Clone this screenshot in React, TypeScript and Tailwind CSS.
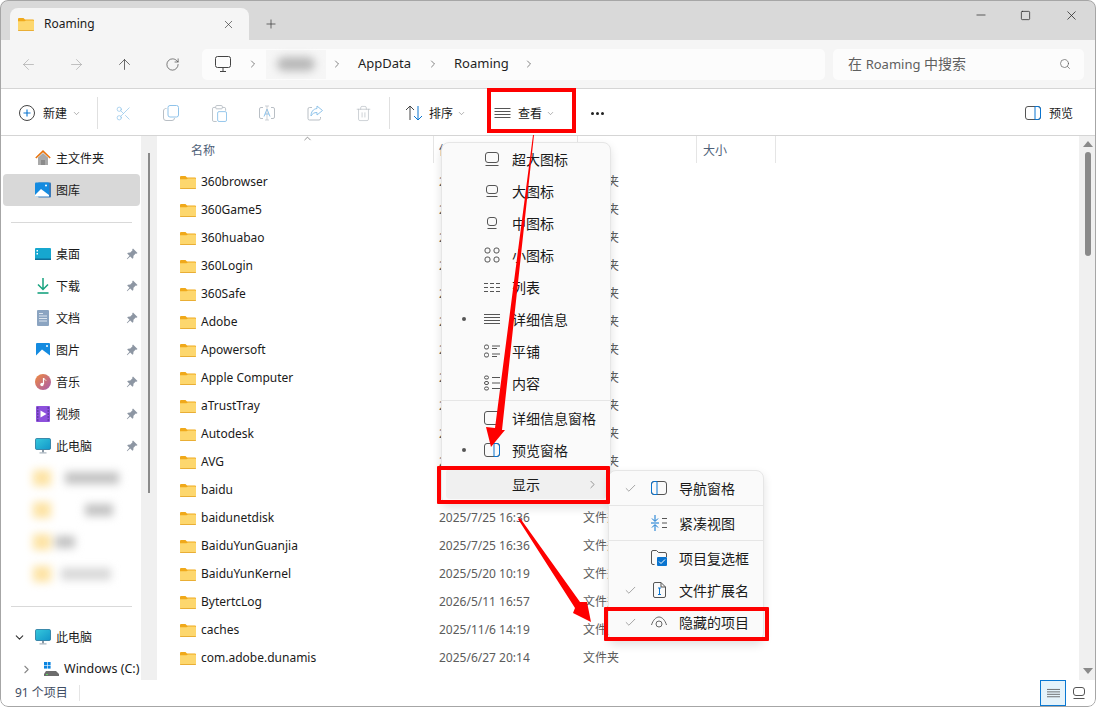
import { ChevronDown, ChevronRight, ChevronUp, Check, Search, X, Plus, Minus, Square, ArrowLeft, ArrowRight, ArrowUp, RotateCw, Scissors, Trash2 } from 'lucide-react'

type Ic = { className?: string }

const Folder = ({ className = 'w-[16px] h-[13px]' }: Ic) => (
  <svg viewBox="0 0 16 13" className={className}>
    <path d="M0 1a1 1 0 0 1 1-1h4.500l1.500 1.500h8a1 1 0 0 1 1 1V5H0z" fill="#f0a91b" />
    <path d="M0 3.200h6.500L8 2.400h7a1 1 0 0 1 1 1V12a1 1 0 0 1-1 1H1a1 1 0 0 1-1-1z" fill="#fdd76e" />
    <path d="M0 12h16v.2a.8.8 0 0 1-.8.8H.8a.8.8 0 0 1-.8-.8z" fill="#e9ae35" />
  </svg>
)

// 视图图标
const Lines = ({ className = 'w-[16px] h-[13px]', n = 4 }: Ic & { n?: number }) => (
  <svg viewBox="0 0 16 13" className={className} stroke="#555" strokeWidth="1" fill="none">
    {n === 4 && <path d="M0 1.500h16M0 4.500h16M0 7.500h16M0 10.500h16" />}
    {n === 3 && <path d="M0 2.500h4M6 2.500h4M12 2.500h4M0 6.500h4M6 6.500h4M12 6.500h4M0 10.500h4M6 10.500h4M12 10.500h4" />}
  </svg>
)

const Pane = ({ side }: { side: 'left' | 'right' | 'none' }) => (
  <svg viewBox="0 0 16 14" className="w-[16px] h-[14px]" fill="none">
    <rect x="0.500" y="0.500" width="15" height="13" rx="2.500" stroke="#555" />
    {side === 'right' && <path d="M10 .5h3a2.500 2.500 0 0 1 2.500 2.500v8a2.500 2.500 0 0 1-2.500 2.500h-3z" stroke="#0a74cf" />}
    {side === 'left' && <path d="M6 .5H3A2.500 2.500 0 0 0 .5 3v8A2.500 2.500 0 0 0 3 13.500h3z" stroke="#0a74cf" />}
  </svg>
)

const ThumbIcon = ({ w, h }: { w: number; h: number }) => (
  <svg width={w} height={h + 3} viewBox={`0 0 ${w} ${h + 3}`} fill="none" stroke="#555">
    <rect x="0.500" y="0.500" width={w - 1} height={h - 1} rx="2.500" />
    <path d={`M0.500 ${h + 2.5}h${w - 1}`} />
  </svg>
)

const SmallGrid = () => (
  <svg viewBox="0 0 16 16" className="w-[16px] h-[16px]" fill="none" stroke="#555">
    <rect x="1" y="1" width="5" height="5" rx="2" />
    <rect x="10" y="1" width="5" height="5" rx="2" />
    <rect x="1" y="10" width="5" height="5" rx="2" />
    <rect x="10" y="10" width="5" height="5" rx="2" />
  </svg>
)

const Tiles = () => (
  <svg viewBox="0 0 16 14" className="w-[16px] h-[14px]" fill="none" stroke="#555">
    <rect x="0.500" y="1" width="4" height="4" rx="1.500" />
    <rect x="0.500" y="9" width="4" height="4" rx="1.500" />
    <path d="M8 2h8M8 4.500h5M8 10h8M8 12.500h5" />
  </svg>
)

const ContentIc = () => (
  <svg viewBox="0 0 16 16" className="w-[16px] h-[16px]" fill="none" stroke="#555">
    <rect x="0.500" y="1" width="4" height="3" rx="1.500" />
    <rect x="0.500" y="6.500" width="4" height="3" rx="1.500" />
    <rect x="0.500" y="12" width="4" height="3" rx="1.500" />
    <path d="M8 2.500h8M8 8h8M8 13.500h8" />
  </svg>
)

const Pin = () => (
  <svg viewBox="0 0 12 12" className="w-[12px] h-[12px]" fill="#8d96a3">
    <path d="M7 .5l4.500 4.500-1 .8-.8-.3L7.500 7.700 7.300 10l-.8.800L4.200 8.500 1.200 11.200.8 10.800l2.700-3L1.200 5.500 2 4.700l2.300-.2L6.500 2.300l-.3-.8z" />
  </svg>
)

const Monitor = ({ className = 'w-[16px] h-[16px]' }: Ic) => (
  <svg viewBox="0 0 16 16" className={className}>
    <defs>
      <linearGradient id="pc" x1="0" y1="0" x2="1" y2="1">
        <stop offset="0" stopColor="#35c8dc" />
        <stop offset="1" stopColor="#1296c9" />
      </linearGradient>
    </defs>
    <rect x="0.500" y="0.500" width="15" height="11" rx="1.200" fill="url(#pc)" stroke="#15658f" strokeWidth="0.700" />
    <rect x="7" y="12" width="2" height="2.500" fill="#8a98a5" />
    <rect x="4.500" y="14.300" width="7" height="1.200" fill="#a7b3bd" />
  </svg>
)

const sideIcons: Record<string, React.ReactNode> = {
  home: (
    <svg viewBox="0 0 16 16" className="w-[16px] h-[16px]">
      <path d="M3 7.500L8 3l5 4.500V15H3z" fill="#a9a9a9" />
      <rect x="6" y="10" width="4" height="5" fill="#8b8b8b" />
      <path d="M.8 8L8 1.200 15.200 8" fill="none" stroke="#e8730c" strokeWidth="1.600" />
    </svg>
  ),
  gallery: (
    <svg viewBox="0 0 16 16" className="w-[16px] h-[16px]">
      <rect x="3" y="0.500" width="13" height="15" rx="1" fill="#3a79b8" />
      <rect x="0" y="0.500" width="14" height="14" rx="1" fill="#148be0" />
      <path d="M0 13l6-6 8 6v1.500H0z" fill="#fff" />
      <circle cx="11" cy="3.500" r="1" fill="#fff" />
    </svg>
  ),
  desktop: (
    <svg viewBox="0 0 16 12" className="w-[16px] h-[12px]">
      <rect width="16" height="12" rx="1" fill="#16a7cf" />
      <rect x="1.500" y="2" width="1.500" height="1.500" fill="#fff" />
      <rect x="1.500" y="5" width="1.500" height="1.500" fill="#fff" />
      <rect y="10.500" width="16" height="1.500" fill="#0f6f9a" />
    </svg>
  ),
  download: (
    <svg viewBox="0 0 16 16" className="w-[16px] h-[16px]" fill="none" stroke="#17a37f" strokeWidth="1.500">
      <path d="M8 0v11M3 6.500L8 11.500 13 6.500" />
      <path d="M2.500 15h11" strokeWidth="1.600" />
    </svg>
  ),
  doc: (
    <svg viewBox="0 0 12 16" className="w-[12px] h-[16px]">
      <rect width="12" height="16" rx="1" fill="#8ba4c1" />
      <path d="M2 3.500h4M2 6h8M2 8.500h8M2 11h8" stroke="#e6edf4" strokeWidth="0.900" />
    </svg>
  ),
  pic: (
    <svg viewBox="0 0 14 14" className="w-[14px] h-[14px]">
      <rect width="14" height="14" rx="1" fill="#148be0" />
      <path d="M0 12.500l6-6 8 6V14H0z" fill="#fff" />
      <circle cx="11" cy="3" r="1" fill="#fff" />
    </svg>
  ),
  music: (
    <svg viewBox="0 0 16 16" className="w-[16px] h-[16px]">
      <defs>
        <linearGradient id="mu" x1="0" y1="0" x2="1" y2="1">
          <stop offset="0" stopColor="#f08a3c" />
          <stop offset="1" stopColor="#a75bb0" />
        </linearGradient>
      </defs>
      <circle cx="8" cy="8" r="8" fill="url(#mu)" />
      <path d="M8.500 4v6" stroke="#fff" strokeWidth="1.200" />
      <circle cx="7" cy="10.500" r="1.700" fill="#fff" />
      <path d="M8.500 4c.5 1.500 2 1.500 2.500 2.500" stroke="#fff" fill="none" />
    </svg>
  ),
  video: (
    <svg viewBox="0 0 14 16" className="w-[14px] h-[16px]">
      <rect width="14" height="16" rx="1" fill="#8d50dc" />
      <path d="M4.500 4.500L10.500 8l-6 3.500z" fill="#fff" />
      <path d="M1 2h1.500M1 5h1.500M1 8h1.500M1 11h1.500M1 14h1.500M11.500 2H13M11.500 5H13M11.500 8H13M11.500 11H13M11.500 14H13" stroke="#3d2a73" strokeWidth="1.100" />
    </svg>
  ),
  pc: <Monitor />,
}

const pinned = [
  ['desktop', '桌面'],
  ['download', '下载'],
  ['doc', '文档'],
  ['pic', '图片'],
  ['music', '音乐'],
  ['video', '视频'],
  ['pc', '此电脑'],
]

const files = [
  ['360browser', '2025/3/12 9:20'],
  ['360Game5', '2025/3/12 9:21'],
  ['360huabao', '2025/4/2 18:05'],
  ['360Login', '2025/3/12 9:21'],
  ['360Safe', '2025/5/8 11:32'],
  ['Adobe', '2025/6/27 20:13'],
  ['Apowersoft', '2025/2/19 10:47'],
  ['Apple Computer', '2025/1/6 15:22'],
  ['aTrustTray', '2025/4/16 8:58'],
  ['Autodesk', '2025/5/30 13:40'],
  ['AVG', '2025/3/3 17:11'],
  ['baidu', '2025/7/25 16:35'],
  ['baidunetdisk', '2025/7/25 16:36'],
  ['BaiduYunGuanjia', '2025/7/25 16:36'],
  ['BaiduYunKernel', '2025/5/20 10:19'],
  ['BytertcLog', '2026/5/11 16:57'],
  ['caches', '2025/11/6 14:19'],
  ['com.adobe.dunamis', '2025/6/27 20:14'],
]

// 打码行：灰条的左距和宽度
const blurred = [
  [14, 54, 'bg-[#c2c2c2]'],
  [34, 28, 'bg-[#c2c2c2]'],
  [4, 20, 'bg-[#c2c2c2]'],
  [10, 50, 'bg-[#d8d8d8]'],
] as const

const tools = [
  <Scissors key="cut" className="w-[17px] h-[17px] text-[#8fc3ea]" strokeWidth={1} />,
  <svg key="copy" viewBox="0 0 16 16" className="w-[16px] h-[16px]" fill="none">
    <rect x="5" y="0.500" width="10.500" height="11.500" rx="2" stroke="#8fc3ea" />
    <path d="M3.500 3.500A2.500 2.500 0 0 0 .5 6v7a2.500 2.500 0 0 0 2.500 2.500h6A2.500 2.500 0 0 0 11.500 13" stroke="#b9bfc5" />
  </svg>,
  <svg key="paste" viewBox="0 0 16 18" className="w-[15px] h-[17px]" fill="none">
    <path d="M4 2.500H2A1.500 1.500 0 0 0 .5 4v12A1.500 1.500 0 0 0 2 17.500h3M11 2.500h2A1.500 1.500 0 0 1 14.500 4v2" stroke="#b9bfc5" />
    <rect x="4" y="0.500" width="7" height="3.500" rx="1" stroke="#b9bfc5" />
    <rect x="6" y="7" width="9.500" height="10.500" rx="1.500" stroke="#8fc3ea" />
  </svg>,
  <svg key="rename" viewBox="0 0 16 16" className="w-[16px] h-[16px]" fill="none">
    <path d="M4 2.500H2A1.500 1.500 0 0 0 .5 4v8A1.500 1.500 0 0 0 2 13.500h2M12 2.500h2A1.500 1.500 0 0 1 15.500 4v8a1.500 1.500 0 0 1-1.500 1.500h-2" stroke="#b9bfc5" />
    <path d="M5 11.500L8 4l3 7.500M6 9h4" stroke="#8fc3ea" />
    <path d="M6 1h4M8 1v14M6 15h4" stroke="#b9bfc5" strokeWidth="0.700" />
  </svg>,
  <svg key="share" viewBox="0 0 16 16" className="w-[16px] h-[16px]" fill="none">
    <path d="M5 2.500H2.500A1.500 1.500 0 0 0 1 4v9.500A1.500 1.500 0 0 0 2.500 15H12a1.500 1.500 0 0 0 1.500-1.500V12" stroke="#b9bfc5" />
    <path d="M10 1l5.500 4.500L10 10V7.500c-3 0-4.500 1-6 3.500 0-4 2-7 6-7.500z" stroke="#8fc3ea" />
  </svg>,
  <Trash2 key="trash" className="w-[17px] h-[17px] text-[#b9bfc5]" strokeWidth={1} />,
]

const menuTop = [
  { icon: <ThumbIcon w={14} h={11} />, label: '超大图标' },
  { icon: <ThumbIcon w={12} h={9} />, label: '大图标' },
  { icon: <ThumbIcon w={10} h={9} />, label: '中图标' },
  { icon: <SmallGrid />, label: '小图标' },
  { icon: <Lines n={3} />, label: '列表' },
  { icon: <Lines n={4} />, label: '详细信息', dot: true },
  { icon: <Tiles />, label: '平铺' },
  { icon: <ContentIc />, label: '内容' },
]

function MenuRow({ icon, label, dot }: { icon: React.ReactNode; label: string; dot?: boolean }) {
  return (
    <div className="flex h-[32px] items-center text-[14px] text-[#1b1b1b]">
      <span className="flex w-[42px] justify-center">
        {dot && <span className="ml-[1px] h-[4px] w-[4px] rounded-full bg-[#555]" />}
      </span>
      <span className="flex w-[16px] justify-center">{icon}</span>
      <span className="ml-[12px]">{label}</span>
    </div>
  )
}

function SubRow({ icon, label, checked }: { icon: React.ReactNode; label: string; checked?: boolean }) {
  return (
    <div className="flex h-[32px] items-center text-[14px] text-[#1b1b1b]">
      <span className="flex w-[42px] justify-center">
        {checked && <Check className="h-[13px] w-[13px] text-[#777]" strokeWidth={1.2} />}
      </span>
      <span className="flex w-[16px] justify-center">{icon}</span>
      <span className="ml-[12px]">{label}</span>
    </div>
  )
}

function Sidebar() {
  return (
    <div className="flex w-[157px] shrink-0">
      <div className="w-[141px] overflow-hidden pl-[3px] pt-[6px] text-[12px] text-[#1a1a1a]">
        <div className="flex h-[32px] w-[137px] items-center pl-[32px]">
          <span className="flex w-[16px] justify-center">{sideIcons.home}</span>
          <span className="ml-[5px] pt-[2px]">主文件夹</span>
        </div>
        <div className="flex h-[32px] w-[137px] items-center rounded-[4px] bg-[#d8d8d8] pl-[32px]">
          <span className="flex w-[16px] justify-center">{sideIcons.gallery}</span>
          <span className="ml-[5px] pt-[2px]">图库</span>
        </div>
        <div className="ml-[8px] mr-[9px] mb-[15px] mt-[16px] h-px bg-[#d9d9d9]" />
        {pinned.map(([k, label]) => (
          <div key={k} className="flex h-[32px] w-[137px] items-center pl-[32px]">
            <span className="flex w-[16px] justify-center">{sideIcons[k]}</span>
            <span className="ml-[5px] pt-[2px]">{label}</span>
            <span className="ml-auto mr-[2px]"><Pin /></span>
          </div>
        ))}
        {/* 打码的固定文件夹 */}
        <div className="h-[144px] pl-[30px] blur-[4px]">
          {blurred.map(([m, w, bg], i) => (
            <div key={i} className="flex h-[32px] items-center">
              <span className="h-[16px] w-[18px] bg-[#fde3a4]" />
              <span style={{ marginLeft: m, width: w }} className={`h-[12px] ${bg}`} />
            </div>
          ))}
        </div>
        <div className="ml-[8px] mr-[9px] mb-[14px] h-px bg-[#d9d9d9]" />
        <div className="flex h-[32px] items-center pl-[10px]">
          <ChevronDown className="h-[13px] w-[13px] text-[#333]" strokeWidth={2} />
          <span className="ml-[9px] flex w-[16px] justify-center"><Monitor /></span>
          <span className="ml-[5px] pt-[2px]">此电脑</span>
        </div>
        <div className="flex h-[32px] items-center whitespace-nowrap pl-[17px]">
          <ChevronRight className="h-[13px] w-[13px] text-[#888]" strokeWidth={2} />
          <svg viewBox="0 0 15 14" className="ml-[11px] h-[14px] w-[15px]">
            <rect x="0" y="0" width="3" height="3" fill="#0a84e0" />
            <rect x="3.600" y="0" width="3" height="3" fill="#0a84e0" />
            <rect x="0" y="3.600" width="3" height="3" fill="#0a84e0" />
            <rect x="3.600" y="3.600" width="3" height="3" fill="#0a84e0" />
            <path d="M2 9h10l3 3v2H0v-2z" fill="#6d6d6d" />
            <rect x="2" y="12" width="2" height="1" fill="#5fd35f" />
          </svg>
          <span className="ml-[5px] text-[12.500px]">Windows (C:)</span>
        </div>
      </div>
      <div className="relative w-[16px] bg-[#f0f0f0]">
        <div className="mx-auto mt-[17px] h-[340px] w-[2.500px] bg-[#8a8a8a]" />
      </div>
    </div>
  )
}

function FileList() {
  return (
    <div className="relative min-w-0 flex-1 overflow-hidden pl-[3px]">
      <div className="relative flex h-[27px] items-center text-[12px] text-[#4f6178]">
        <div className="flex h-full w-[273px] items-center pl-[31px] pt-[2px]">名称</div>
        <div className="flex h-full w-[144px] items-center border-l border-[#e5e5e5] pl-[5px] pt-[2px]">修改日期</div>
        <div className="flex h-full w-[119px] items-center border-l border-[#e5e5e5] pl-[5px] pt-[2px]">类型</div>
        <div className="flex h-full w-[80px] items-center border-x border-[#e5e5e5] pl-[6px] pt-[2px]">大小</div>
        <ChevronUp className="absolute left-[142px] top-[-3px] h-[11px] w-[11px] text-[#666]" strokeWidth={1.5} />
      </div>
      <div className="pl-[16px] pt-[5px]">
        {files.map(([name, date]) => (
          <div key={name} className="flex h-[28px] items-center text-[12px] text-[#1a1a1a]">
            <div className="flex w-[257px] items-center pl-[4px]">
              <Folder />
              <span className="ml-[5px]">{name}</span>
            </div>
            <div className="w-[144px] pl-[6px] text-[#5c5c5c]">{date}</div>
            <div className="pl-[6px] text-[#5c5c5c]">文件夹</div>
          </div>
        ))}
        <div className="flex h-[28px] items-start pl-[4px] pt-[8px]"><Folder /></div>
      </div>
    </div>
  )
}

export default function App() {
  return (
    <div className="relative h-[707px] w-[1096px] overflow-hidden rounded-[8px] bg-white font-['Noto_Sans','Noto_Sans_CJK_SC',sans-serif]">
      {/* 标题栏 */}
      <div className="flex h-[40px] bg-[#d9d9d9] pl-[10px]">
        <div className="mt-[8px] flex h-[32px] w-[239px] items-center rounded-t-[8px] bg-[#f5f5f5] pl-[8px] text-[12px] text-[#1a1a1a]">
          <Folder className="h-[13px] w-[16px]" />
          <span className="ml-[10px]">Roaming</span>
          <X className="ml-auto mr-[14px] h-[13px] w-[13px] text-[#333]" strokeWidth={1.2} />
        </div>
        <div className="ml-[14px] mt-[16px] flex h-[16px] w-[16px] items-center justify-center">
          <Plus className="h-[14px] w-[14px] text-[#333]" strokeWidth={1.2} />
        </div>
        <div className="ml-auto flex h-[30px] items-center text-[#222]">
          <span className="flex w-[45px] justify-center"><Minus className="h-[14px] w-[14px]" strokeWidth={1.2} /></span>
          <span className="flex w-[45px] justify-center"><Square className="h-[11px] w-[11px]" strokeWidth={1.6} /></span>
          <span className="flex w-[46px] justify-center"><X className="h-[15px] w-[15px]" strokeWidth={1.2} /></span>
          <span className="w-[2px]" />
        </div>
      </div>

      {/* 地址栏 */}
      <div className="flex h-[49px] items-center border-b border-[#d5d5d5] bg-[#f5f5f5] pl-[4px] pr-[12px]">
        <span className="flex w-[48px] justify-center"><ArrowLeft className="h-[17px] w-[17px] text-[#aaa]" strokeWidth={1} /></span>
        <span className="flex w-[48px] justify-center"><ArrowRight className="h-[17px] w-[17px] text-[#aaa]" strokeWidth={1} /></span>
        <span className="flex w-[48px] justify-center"><ArrowUp className="h-[17px] w-[17px] text-[#333]" strokeWidth={1} /></span>
        <span className="flex w-[48px] justify-center"><RotateCw className="h-[15px] w-[15px] text-[#444]" strokeWidth={1.1} /></span>
        <div className="ml-[6px] flex h-[31px] w-[623px] items-center rounded-[5px] bg-[#fcfcfc] text-[13px] text-[#1f1f1f]">
          <svg viewBox="0 0 16 16" className="ml-[13px] h-[16px] w-[16px]" fill="none" stroke="#444">
            <rect x="0.500" y="0.500" width="15" height="11" rx="2" />
            <path d="M8 12v3M5 15.500h6" />
          </svg>
          <ChevronRight className="ml-[16px] h-[12px] w-[12px] text-[#333]" strokeWidth={1.2} />
          <div className="ml-[7px] flex h-[29px] w-[60px] items-center justify-center bg-[#f6f6f6]">
            <span className="h-[14px] w-[38px] rounded-full bg-[#b8b8b8] blur-[4px]" />
          </div>
          <ChevronRight className="ml-[5px] h-[12px] w-[12px] text-[#333]" strokeWidth={1.2} />
          <span className="ml-[15px] w-[54px]">AppData</span>
          <ChevronRight className="ml-[15px] h-[12px] w-[12px] text-[#333]" strokeWidth={1.2} />
          <span className="ml-[15px] w-[55px]">Roaming</span>
          <ChevronRight className="ml-[14px] h-[12px] w-[12px] text-[#333]" strokeWidth={1.2} />
        </div>
        <div className="ml-[8px] flex h-[31px] flex-1 items-center rounded-[5px] bg-[#fcfcfc] pl-[15px] pr-[13px] text-[14px] text-[#5f5f5f]">
          <span>在 <span className="text-[13px]">Roaming</span> 中搜索</span>
          <Search className="ml-auto h-[12px] w-[12px] text-[#555]" strokeWidth={1.3} />
        </div>
      </div>

      {/* 工具栏 */}
      <div className="flex h-[47px] items-center border-b border-[#d5d5d5] pt-[2px] text-[12px] text-[#1a1a1a]">
        <svg viewBox="0 0 16 16" className="ml-[19px] h-[16px] w-[16px]" fill="none">
          <circle cx="8" cy="8" r="7.500" stroke="#444" />
          <path d="M8 4.500v7M4.500 8h7" stroke="#0a74cf" strokeWidth="1.100" />
        </svg>
        <span className="ml-[8px] pt-[2px]">新建</span>
        <ChevronDown className="ml-[5px] h-[9px] w-[9px] text-[#777]" strokeWidth={1.5} />
        <span className="ml-[16px] h-[32px] w-px bg-[#e0e0e0]" />
        <div className="ml-[1px] flex">
          {tools.map((t, i) => (
            <span key={i} className="flex w-[48px] justify-center">{t}</span>
          ))}
        </div>
        <span className="ml-[2px] h-[32px] w-px bg-[#e0e0e0]" />
        <svg viewBox="0 0 18 16" className="ml-[15px] h-[16px] w-[18px]" fill="none">
          <path d="M5 15V1M1 5l4-4 4 4" stroke="#444" />
          <path d="M13 1v14M9 11l4 4 4-4" stroke="#0a74cf" />
        </svg>
        <span className="ml-[6px] pt-[2px]">排序</span>
        <ChevronDown className="ml-[4px] h-[9px] w-[9px] text-[#777]" strokeWidth={1.5} />
        <Lines className="ml-[28px] h-[13px] w-[17px]" />
        <span className="ml-[7px] pt-[2px]">查看</span>
        <ChevronDown className="ml-[4px] h-[9px] w-[9px] text-[#777]" strokeWidth={1.5} />
        <span className="ml-[36px] flex gap-[2px]">
          <i className="h-[3px] w-[3px] rounded-full bg-[#222]" />
          <i className="h-[3px] w-[3px] rounded-full bg-[#222]" />
          <i className="h-[3px] w-[3px] rounded-full bg-[#222]" />
        </span>
        <span className="ml-auto flex items-center gap-[8px] pr-[23px]">
          <Pane side="right" />
          <span className="pt-[2px]">预览</span>
        </span>
      </div>

      {/* 主体 */}
      <div className="flex h-[544px]">
        <Sidebar />
        <FileList />
        <div className="relative flex w-[17px] shrink-0 flex-col items-center bg-[#f0f0f0]">
          <span className="mt-[5px] h-0 w-0 border-x-[5px] border-b-[6px] border-x-transparent border-b-[#8a8a8a]" />
          <span className="mt-[5px] h-[104px] w-[6px] rounded-full bg-[#8a8a8a]" />
          <span className="mt-auto mb-[6px] h-0 w-0 border-x-[5px] border-t-[6px] border-x-transparent border-t-[#8a8a8a]" />
        </div>
      </div>

      {/* 状态栏 */}
      <div className="flex h-[26px] items-center text-[12px] text-[#3f4d63]">
        <span className="ml-[15px]">91 个项目</span>
        <span className="ml-[11px] h-[16px] w-px bg-[#e5e5e5]" />
        <span className="ml-auto flex h-[26px] w-[26px] items-center justify-center border border-[#0a78d2] bg-[#e5f3fb]">
          <Lines className="h-[11px] w-[13px]" />
        </span>
        <span className="ml-[7px] mr-[11px]"><ThumbIcon w={12} h={9} /></span>
      </div>

      {/* 查看 菜单 */}
      <div className="absolute left-[441px] top-[142px] h-[362px] w-[170px] rounded-[8px] border border-[#e6e6e6] bg-[#fafafa] shadow-[0_4px_10px_rgba(0,0,0,0.12)]">
        {menuTop.map(m => (
          <MenuRow key={m.label} icon={m.icon} label={m.label} dot={m.dot} />
        ))}
        <div className="my-[1px] h-px bg-[#e6e6e6]" />
        <MenuRow icon={<Pane side="none" />} label="详细信息窗格" />
        <MenuRow icon={<Pane side="right" />} label="预览窗格" dot />
        <div className="mx-[4px] mt-[3px] flex h-[30px] items-center rounded-[4px] bg-[#f0f0f0] pl-[66px] text-[14px] text-[#1b1b1b]">
          <span>显示</span>
          <ChevronRight className="ml-auto mr-[7px] h-[13px] w-[13px] text-[#666]" strokeWidth={1.2} />
        </div>
      </div>

      {/* 显示 子菜单 */}
      <div className="absolute left-[608px] top-[470px] h-[171px] w-[156px] rounded-[8px] border border-[#e6e6e6] bg-[#fafafa] pt-[1px] shadow-[0_4px_10px_rgba(0,0,0,0.12)]">
        <SubRow icon={<Pane side="left" />} label="导航窗格" checked />
        <div className="my-[1px] h-px bg-[#e6e6e6]" />
        <SubRow
          icon={
            <svg viewBox="0 0 16 16" className="h-[16px] w-[16px]" fill="none">
              <path d="M4 0v6M1 3.500l3 3 3-3M4 16v-6M1 12.500l3-3 3 3M0 8h8" stroke="#0a74cf" />
              <path d="M11 3.500h5M11 8h5M11 12.500h5" stroke="#555" />
            </svg>
          }
          label="紧凑视图"
        />
        <div className="my-[1px] h-px bg-[#e6e6e6]" />
        <SubRow
          icon={
            <svg viewBox="0 0 16 16" className="h-[16px] w-[16px]">
              <path d="M3.500 14.500H2A1.500 1.500 0 0 1 .5 13V2A1.500 1.500 0 0 1 2 .5h3.500l2 2H14A1.500 1.500 0 0 1 15.500 4v3" fill="none" stroke="#555" />
              <rect x="6" y="7" width="10" height="9" rx="1" fill="#0a74cf" />
              <path d="M8 11.500l2 2 4-4" stroke="#fff" fill="none" />
            </svg>
          }
          label="项目复选框"
        />
        <SubRow
          checked
          icon={
            <svg viewBox="0 0 13 16" className="h-[16px] w-[13px]" fill="none">
              <path d="M8 .5H2A1.500 1.500 0 0 0 .5 2v12A1.500 1.500 0 0 0 2 15.500h9a1.500 1.500 0 0 0 1.500-1.500V5z" stroke="#555" />
              <path d="M8 .5V5h4.500" stroke="#555" />
              <path d="M6.500 6v6.500M5 6h3M5 12.500h3" stroke="#0a74cf" />
            </svg>
          }
          label="文件扩展名"
        />
        <SubRow
          checked
          icon={
            <svg viewBox="0 0 16 12" className="h-[12px] w-[16px]" fill="none" stroke="#666">
              <path d="M.5 9C2 4 5 1 8 1s6 3 7.500 8" />
              <circle cx="8" cy="8" r="3" />
            </svg>
          }
          label="隐藏的项目"
        />
      </div>

      {/* 标注：红框和箭头 */}
      <div className="absolute left-[487px] top-[88px] h-[45px] w-[89px] border-[4px] border-[#fe0000]" />
      <div className="absolute left-[437px] top-[466px] h-[38px] w-[173px] rounded-[1px] border-[4px] border-[#fe0000]" />
      <div className="absolute left-[604px] top-[607px] h-[34px] w-[165px] rounded-[1px] border-[4px] border-[#fe0000]" />
      <svg className="pointer-events-none absolute left-0 top-0 h-[707px] w-[1096px]" viewBox="0 0 1096 707">
        <path d="M533 135L534 135 502 430 505 430 491 447 486 427 495 428z" fill="#fe0000" />
        <path d="M518 519L520 518 580 602 587 602 591 622 573 613 575 608z" fill="#fe0000" />
      </svg>

      <div className="pointer-events-none absolute inset-0 rounded-[8px] border border-[#a6a6a6]" />
    </div>
  )
}
